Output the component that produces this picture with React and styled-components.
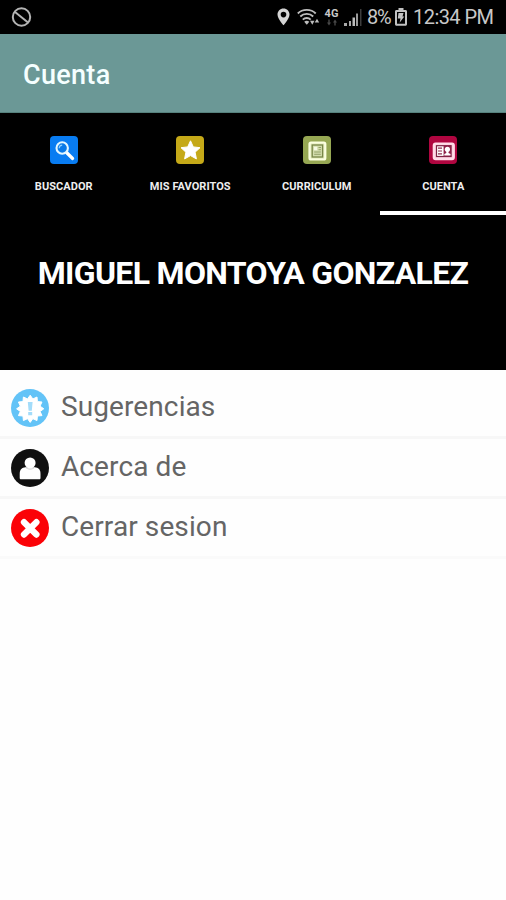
import React from "react";
import styled, { createGlobalStyle } from "styled-components";

const BlockIcon = () => (
  <svg width="22" height="22" viewBox="0 0 22 22" fill="none">
    <circle cx="10.500" cy="11" r="8.700" stroke="#b4b4b4" strokeWidth="2" />
    <path d="M4 6 17 16.500" stroke="#b4b4b4" strokeWidth="2" />
  </svg>
);

const PinIcon = () => (
  <svg width="13" height="18" viewBox="0 0 13 18">
    <path
      d="M6.500.5C3 .5.5 3.200.5 6.500c0 4.300 6 10.700 6 10.700s6-6.400 6-10.700c0-3.300-2.500-6-6-6zm0 3.300a2.800 2.800 0 1 1 0 5.600 2.800 2.800 0 0 1 0-5.600z"
      fill="#d4d4d4"
      fillRule="evenodd"
    />
  </svg>
);

const WifiIcon = () => (
  <svg width="24" height="18" viewBox="0 0 24 18" fill="none">
    <g stroke="#bdbdbd" strokeWidth="1.900">
      <path d="M.8 5.500C5.500.7 14 .7 18.700 5.500" />
      <path d="M3.300 8.500C6.800 5 12.700 5 16.200 8.500" />
      <path d="M5.800 11.600c2.200-2.200 5.700-2.200 7.900 0" />
    </g>
    <path d="M7.200 13.800c1.500-1.400 3.600-1.400 5.100 0l-2.500 2.900z" fill="#bdbdbd" />
    <path d="M13 12.800h4.500l-2.200 4zM17.700 14.600h4.500L20 10.800z" fill="#bdbdbd" />
  </svg>
);

const DataArrows = () => (
  <svg width="12" height="7" viewBox="0 0 12 7">
    <path d="M1 3.500 3 6.500 5 3.500H3.700V.5H2.300v3zM7 3.500 9 .5l2 3H9.700v3H8.300v-3z" fill="#484848" />
  </svg>
);

const SignalIcon = () => (
  <svg width="18" height="17" viewBox="0 0 18 17">
    <path d="M0 14h3v3H0zM5 12h2v5H5z" fill="#a8a8a8" />
    <path d="M8.500 8.500H11V17H8.500z" fill="#bcbcbc" />
    <path d="M12 4.500h2V17h-2z" fill="#9a9a9a" />
    <path d="M16 0h1.500v17H16z" fill="#3d3d3d" />
  </svg>
);

const BatteryIcon = () => (
  <svg width="12" height="18" viewBox="0 0 12 18">
    <path
      d="M3.500 0h5v2H10.500c.8 0 1.500.6 1.500 1.400v12.800c0 .8-.7 1.500-1.500 1.500h-9C.7 17.700 0 17 0 16.200V3.400C0 2.600.7 2 1.500 2h2zM2 4v11.700h8V4z"
      fill="#c2c2c2"
      fillRule="evenodd"
    />
    <path d="M3.500 5H8.500L7.500 8.500H9.300L4.600 14.800 5.500 10.500H2.800z" fill="#c2c2c2" />
  </svg>
);

const SearchGlyph = () => (
  <svg width="28" height="28" viewBox="0 0 28 28" fill="none">
    <path d="M16.500 16.500 22.600 22.500" stroke="#fff" strokeWidth="3.200" strokeLinecap="round" />
    <circle cx="12.200" cy="12" r="5.700" fill="#0879e8" stroke="#e2f6ff" strokeWidth="2.100" />
    <path d="M9.200 12.300c0-1.800 1.200-3 3-3.100" stroke="#8fd0ff" strokeWidth="1.200" />
  </svg>
);

const StarGlyph = () => (
  <svg width="28" height="28" viewBox="0 0 28 28">
    <path
      d="M14.500 4.800 17.300 10.900l6.700.8-4.900 4.500 1.300 6.700-5.900-3.300-5.900 3.300 1.300-6.700L5 11.700l6.700-.8z"
      fill="#fff"
      stroke="#fff"
      strokeLinejoin="round"
    />
  </svg>
);

const DocumentGlyph = () => (
  <svg width="28" height="28" viewBox="0 0 28 28" fill="none">
    <rect x="6.500" y="6.500" width="15.800" height="17" rx="1.500" fill="#dfe6b8" stroke="#fbffe0" strokeWidth="2.200" />
    <rect x="9.200" y="9" width="10.400" height="12" fill="#d3ddad" stroke="#788748" strokeWidth="1.300" />
    <path d="M11 10.700h3.200v3.500H11z" fill="#f6f9e4" />
    <path d="M15.500 11.500h2.500M15.500 13.700h2.500M11.200 16h6.600M11.200 18.300h6.600" stroke="#94a268" />
  </svg>
);

const CardGlyph = () => (
  <svg width="28" height="28" viewBox="0 0 28 28" fill="none">
    <rect x="4.800" y="7.500" width="20" height="15.600" rx="1.800" fill="#fbd0df" stroke="#ffdce8" strokeWidth="2.200" />
    <rect x="7.500" y="9.700" width="14.600" height="10.800" fill="#fff" stroke="#7d2344" strokeWidth="1.200" />
    <path d="M14.600 9.500h7.400v11h-7.400z" fill="#8f1f47" />
    <path d="M9 12.200h4M9 15h4M9 17.800h4" stroke="#8f2d50" strokeWidth="1.200" />
    <circle cx="18.400" cy="13.300" r="2.600" fill="#fff" />
    <path d="M17.300 15h2.200v2l2 1v1.500h-6.200V18l2-1z" fill="#fff" />
  </svg>
);

const SuggestionIcon = () => {
  const points = Array.from({ length: 24 }, (_, i) => {
    const radius = i % 2 ? 10.2 : 13.6;
    const angle = (i * Math.PI) / 12;
    return `${19.200 + radius * Math.sin(angle)},${19.800 - radius * Math.cos(angle)}`;
  }).join(" ");
  return (
    <svg width="38" height="38" viewBox="0 0 38 38">
      <circle cx="19" cy="19" r="19" fill="#63c3f7" />
      <polygon points={points} fill="#fff" stroke="#fff" strokeLinejoin="round" />
      <path d="M16.800 13h4.800l-.8 8.800h-3.200zM17.200 23h4v3.300h-4z" fill="#a3dcfa" />
    </svg>
  );
};

const PersonIcon = () => (
  <svg width="38" height="38" viewBox="0 0 38 38">
    <circle cx="19" cy="19" r="19" fill="#101010" />
    <path
      d="M8.700 29v-4.500c0-3.800 2.300-6 5.800-6.200h9.200c3.600.2 5.800 2.400 5.800 6.200V29c0 .8-.5 1.300-1.300 1.300H10c-.8 0-1.300-.5-1.300-1.300z"
      fill="#fff"
    />
    <circle cx="19.100" cy="13.900" r="5.500" fill="#fff" />
    <path d="M14.500 18.300c2.500 2.400 6.700 2.400 9.200 0" stroke="#cfcfcf" fill="none" />
  </svg>
);

const CloseIcon = () => (
  <svg width="38" height="38" viewBox="0 0 38 38">
    <circle cx="19" cy="19" r="19" fill="#fb0207" />
    <path d="M13 13.200 25.400 25.600M25.400 13.200 13 25.600" stroke="#fff" strokeWidth="6.300" strokeLinecap="round" />
  </svg>
);

const tabs = [
  { id: 1, label: "BUSCADOR", color: "#087cf2", icon: <SearchGlyph /> },
  { id: 2, label: "MIS FAVORITOS", color: "#c5a918", icon: <StarGlyph /> },
  { id: 3, label: "CURRICULUM", color: "#96a753", icon: <DocumentGlyph /> },
  { id: 4, label: "CUENTA", color: "#b00640", icon: <CardGlyph />, active: true },
];

const options = [
  { id: 1, title: "Sugerencias", icon: <SuggestionIcon /> },
  { id: 2, title: "Acerca de", icon: <PersonIcon /> },
  { id: 3, title: "Cerrar sesion", icon: <CloseIcon /> },
];

const App = () => {
  return (
    <Screen>
      <GlobalStyle />
      <StatusBar>
        <BlockIcon />
        <StatusGroup>
          <PinIcon />
          <WifiIcon />
          <Network>
            <span>4G</span>
            <DataArrows />
          </Network>
          <SignalIcon />
          <Percent>8%</Percent>
          <BatteryIcon />
          <Clock>12:34 PM</Clock>
        </StatusGroup>
      </StatusBar>
      <Header>
        <Title>Cuenta</Title>
      </Header>
      <TabBar>
        {tabs.map((tab) => (
          <Tab key={tab.id} $active={tab.active}>
            <TabIcon $color={tab.color}>{tab.icon}</TabIcon>
            <TabLabel>{tab.label}</TabLabel>
          </Tab>
        ))}
      </TabBar>
      <Profile>
        <UserName>MIGUEL MONTOYA GONZALEZ</UserName>
      </Profile>
      <OptionList>
        {options.map((opt) => (
          <Option key={opt.id}>
            {opt.icon}
            <OptionTitle>{opt.title}</OptionTitle>
          </Option>
        ))}
      </OptionList>
    </Screen>
  );
};

const GlobalStyle = createGlobalStyle`
  * {
    box-sizing: border-box;
  }

  body {
    margin: 0;
    background-color: #fefefe;
    font-family: Roboto, sans-serif;
  }

  svg {
    display: block;
    flex-shrink: 0;
  }
`;

const Screen = styled.div`
  width: 100%;
  min-height: 900px;
  display: flex;
  flex-direction: column;
  overflow: hidden;
`;

const StatusBar = styled.div`
  height: 34px;
  padding: 0 14px 0 11px;
  display: flex;
  align-items: center;
  justify-content: space-between;
  background-color: #000;
  color: #c8c8c8;
`;

const StatusGroup = styled.div`
  display: flex;
  align-items: center;

  > svg:first-child {
    margin-right: 7px;
  }
`;

const Network = styled.div`
  width: 15px;
  margin: 0 5px 0 3px;
  display: flex;
  flex-direction: column;
  align-items: center;

  span {
    font-size: 11px;
    line-height: 10px;
    font-weight: 700;
  }
`;

const Percent = styled.span`
  width: 25px;
  margin: 0 3px 0 5px;
  font-size: 20px;
  line-height: 24px;
  letter-spacing: -1.3px;
  white-space: nowrap;
`;

const Clock = styled.span`
  width: 79px;
  margin-left: 6px;
  font-size: 20px;
  line-height: 24px;
  letter-spacing: -0.55px;
  white-space: nowrap;
`;

const Header = styled.header`
  height: 79px;
  padding: 4px 23px 0;
  display: flex;
  align-items: center;
  background-color: #6b9896;
  border-bottom: 1px solid #56817d;
`;

const Title = styled.h1`
  margin: 0;
  font-size: 27px;
  line-height: 32px;
  font-weight: 500;
  letter-spacing: 0.3px;
  color: #f5ffff;
`;

const TabBar = styled.nav`
  height: 102px;
  display: grid;
  grid-template-columns: repeat(4, 1fr);
  background-color: #000;
`;

const Tab = styled.div`
  padding: 23px 0 0 1px;
  display: flex;
  flex-direction: column;
  align-items: center;
  border-bottom: 4px solid ${({ $active }) => ($active ? "#fff" : "transparent")};
`;

const TabIcon = styled.div`
  width: 28px;
  height: 28px;
  border-radius: 4px;
  background-color: ${({ $color }) => $color};
`;

const TabLabel = styled.span`
  margin-top: 16px;
  font-size: 11px;
  line-height: 14px;
  font-weight: 700;
  letter-spacing: 0.05px;
  white-space: nowrap;
  color: #eee;
`;

const Profile = styled.section`
  height: 155px;
  padding-top: 38px;
  background-color: #000;
`;

const UserName = styled.h2`
  margin: 0;
  font-size: 32px;
  line-height: 40px;
  font-weight: 700;
  letter-spacing: -0.68px;
  text-align: center;
  white-space: nowrap;
  color: #fff;
`;

const OptionList = styled.div`
  padding-top: 9px;
`;

const Option = styled.div`
  height: 60px;
  padding: 0 11px;
  display: flex;
  align-items: center;
  border-bottom: 3px solid #f7f7f7;

  &:last-child {
    border-bottom-color: #fafafa;
  }
`;

const OptionTitle = styled.span`
  margin: -1px 0 0 12px;
  font-size: 28px;
  line-height: 34px;
  letter-spacing: 0.1px;
  color: #656565;
`;

export default App;
